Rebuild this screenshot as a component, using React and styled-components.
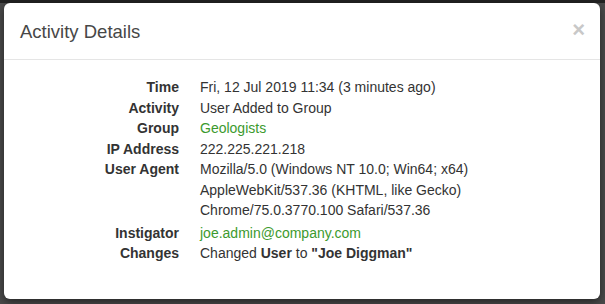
import React from 'react'
import styled, { createGlobalStyle } from 'styled-components'

const Global = createGlobalStyle`
  html, body {
    margin: 0;
    padding: 0;
    background: #474747;
  }
  body {
    font-family: "Liberation Sans", Arial, Helvetica, sans-serif;
    font-size: 14px;
    color: #333;
  }
`

const rows = [
  { label: 'Time', value: 'Fri, 12 Jul 2019 11:34 (3 minutes ago)' },
  { label: 'Activity', value: 'User Added to Group' },
  { label: 'Group', value: 'Geologists', link: true },
  { label: 'IP Address', value: '222.225.221.218' },
  {
    label: 'User Agent',
    value: [
      'Mozilla/5.0 (Windows NT 10.0; Win64; x64)',
      'AppleWebKit/537.36 (KHTML, like Gecko)',
      'Chrome/75.0.3770.100 Safari/537.36',
    ],
  },
  { label: 'Instigator', value: 'joe.admin@company.com', link: true },
]

const App = () => {
  return (
    <Backdrop>
      <Global />
      <Modal>
        <Header>
          <Title>Activity Details</Title>
          <Close aria-label="Close">×</Close>
        </Header>
        <Body>
          <List>
            {rows.map((r) => (
              <Row key={r.label} $gap={r.label === 'User Agent' ? 2 : 0}>
                <Term>{r.label}</Term>
                <Desc $link={r.link}>
                  {Array.isArray(r.value)
                    ? r.value.map((l) => <Line key={l}>{l}</Line>)
                    : r.value}
                </Desc>
              </Row>
            ))}
            <Row>
              <Term>Changes</Term>
              <Desc>
                Changed <b>User</b> to <b>"Joe Diggman"</b>
              </Desc>
            </Row>
          </List>
        </Body>
      </Modal>
    </Backdrop>
  )
}

export default App

const Backdrop = styled.div`
  width: 605px;
  height: 304px;
  padding: 3px 5px 5px 4px;
  box-sizing: border-box;
  background: linear-gradient(#222 0, #222 3px, #4a4a4a 3px);
`
const Modal = styled.div`
  background: #fff;
  border-radius: 6px;
  height: 296px;
  box-shadow: 0 3px 9px rgba(0, 0, 0, 0.5);
  overflow: hidden;
`
const Header = styled.div`
  display: flex;
  align-items: center;
  justify-content: space-between;
  height: 56px;
  padding: 0 15px 0 16px;
  border-bottom: 1px solid #e5e5e5;
`
const Title = styled.h4`
  margin: 2px 0 0;
  font-size: 18.5px;
  font-weight: normal;
  color: #474747;
`
const Close = styled.span`
  font-size: 22px;
  font-weight: bold;
  color: #c8c8c8;
  line-height: 1;
  margin-top: -3px;
`
const Body = styled.div`
  padding: 17px 15px 15px;
`
const List = styled.dl`
  margin: 0;
  line-height: 20.5px;
`
const Row = styled.div`
  display: grid;
  grid-template-columns: 160px 1fr;
  column-gap: 21px;
  margin-bottom: ${(p) => p.$gap || 0}px;
`
const Term = styled.dt`
  font-weight: bold;
  text-align: right;
  color: #333;
`
const Desc = styled.dd`
  margin: 0;
  color: ${(p) => (p.$link ? '#3c9a2e' : '#333')};
`
const Line = styled.div``
